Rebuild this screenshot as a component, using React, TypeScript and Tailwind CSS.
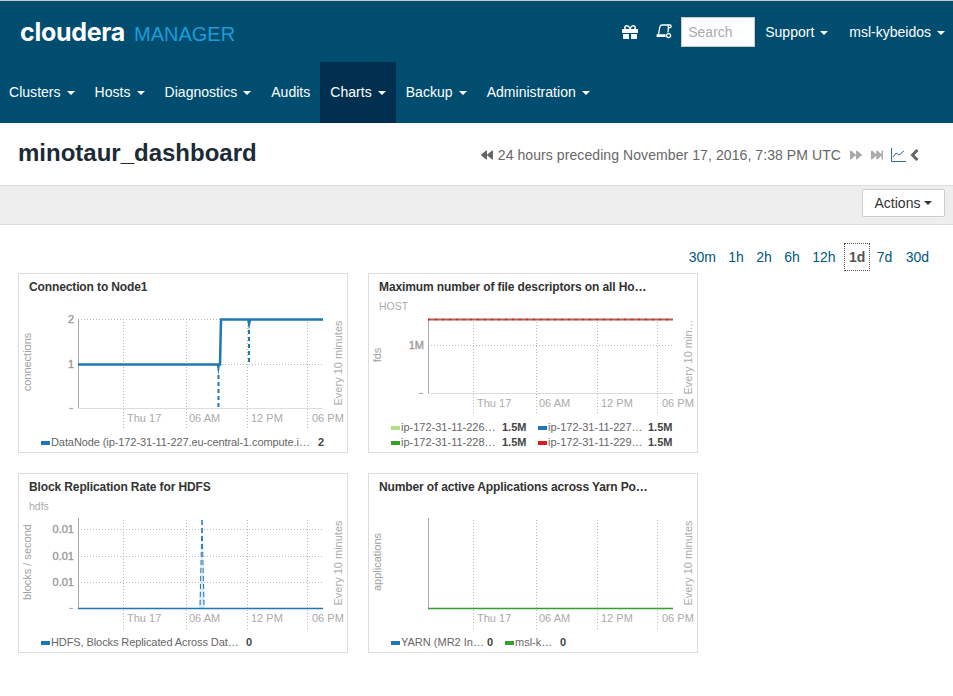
import { FaBackward, FaFastForward, FaForward, FaGift } from 'react-icons/fa';
import { ReactNode } from 'react';

const leftNav = ['Clusters', 'Hosts', 'Diagnostics', 'Audits', 'Charts', 'Backup', 'Administration'];
const ranges = ['30m', '1h', '2h', '6h', '12h', '1d', '7d', '30d'];
const gridX = [104, 167, 228, 288];

function Caret({ className = 'border-t-white' }: { className?: string }) {
  return <span className={`ml-[6px] inline-block h-0 w-0 border-x-4 border-t-4 border-x-transparent ${className}`} />;
}

interface LegendItem {
  color: string;
  label: string;
  value: string;
  labelWidth: number;
  tight?: boolean;
}

interface ChartCardProps {
  title: string;
  subtitle?: string;
  yTitle: string;
  yTitleCenter: number;
  everyLabel?: string;
  axisBottom?: number;
  axisTop?: number;
  gridTop?: number;
  yTicks: { y: number; label: string }[];
  legend: LegendItem[];
  legendCols?: number;
  children?: ReactNode;
}

function ChartCard({
  title,
  subtitle,
  yTitle,
  yTitleCenter,
  everyLabel = 'Every 10 minutes',
  axisBottom = 93,
  axisTop = 4,
  gridTop = 4,
  yTicks,
  legend,
  legendCols = 1,
  children,
}: ChartCardProps) {
  const ticks = ['Thu 17', '06 AM', '12 PM', '06 PM'];
  const tickX = [108, 170, 232, 293];
  const twoRows = legendCols === 2;
  return (
    <div className="flex h-[180px] w-[330px] flex-col overflow-hidden border border-[#dddddd] bg-white">
      <div className="h-[41px] px-[10px] pt-[5px]">
        <div className="h-[16px] text-[12px] font-bold leading-[16px] tracking-[-0.12px] text-[#333333]">{title}</div>
        {subtitle && <div className="mt-[4px] text-[10.5px] leading-[14px] text-[#aaaaaa]">{subtitle}</div>}
      </div>
      <svg width="328" height={twoRows ? 104 : 118} className="block shrink-0 font-['Liberation_Sans',sans-serif]">
        {gridX.map((x) => (
          <line key={x} x1={x + 0.5} x2={x + 0.5} y1={gridTop} y2={axisBottom + 21} stroke="#bbbbbb" strokeDasharray="1 2" />
        ))}
        {yTicks.map(
          (t) =>
            t.y < axisBottom && (
              <line key={t.y} x1={59} x2={304} y1={t.y + 0.5} y2={t.y + 0.5} stroke="#bbbbbb" strokeDasharray="1 2" />
            ),
        )}
        {/* the lowest tick label is cut by the plot edge, as in the real chart */}
        <svg x={0} y={0} width={59} height={axisBottom + 1}>
          {yTicks.map((t) => (
            <text
              key={t.label + t.y}
              x={55}
              y={t.y < axisBottom ? t.y + 4 : t.y + 8}
              textAnchor="end"
              fontSize="11"
              fill="#888888"
              stroke="#aaaaaa"
              strokeWidth="0.4"
            >
              {t.label}
            </text>
          ))}
        </svg>
        <line x1={59.5} x2={59.5} y1={axisTop} y2={axisBottom + 1} stroke="#aaaaaa" />
        <line x1={59} x2={304} y1={axisBottom + 0.5} y2={axisBottom + 0.5} stroke="#dddddd" />
        {ticks.map((t, i) => (
          <text key={t} x={tickX[i]} y={axisBottom + 14} fontSize="11" fill="#aaaaaa">
            {t}
          </text>
        ))}
        {children}
        <text transform={`translate(12 ${yTitleCenter}) rotate(-90)`} textAnchor="middle" fontSize="11" fill="#a0a0a0">
          {yTitle}
        </text>
        <text transform={`translate(323 ${axisBottom === 78 ? 42 : 48}) rotate(-90)`} textAnchor="middle" fontSize="11" fill="#aaaaaa">
          {everyLabel}
        </text>
      </svg>
      <div className={`flex flex-wrap pl-[22px] text-[11px] leading-[15px] text-[#666666] ${twoRows ? 'pt-[1px]' : 'pt-[2px]'}`}>
        {legend.map((item) => (
          <div key={item.label + item.color} className="flex items-center">
            <span className="mr-px h-[4px] w-[9px]" style={{ backgroundColor: item.color }} />
            <span className={`whitespace-nowrap ${item.tight ? 'tracking-[-0.09px]' : ''}`} style={{ width: item.labelWidth }}>
              {item.label}
            </span>
            <span
              className="mr-[12px] whitespace-nowrap font-bold text-[#444444]"
              style={{ width: item.value.length > 1 ? 24 : 6 }}
            >
              {item.value}
            </span>
          </div>
        ))}
      </div>
    </div>
  );
}

function ScrollIcon() {
  return (
    <svg width="16" height="15" viewBox="0 0 16 15" fill="none" stroke="white" strokeWidth="1.3" className="block">
      <path d="M2.5 10 C3.2 8 3.4 4 4 2.5 C4.4 1.4 5.2 1 6 1 H14 C15.4 1 15.6 3.4 14 3.6 H12.4 L12 8.5" />
      <path d="M11.5 1.2 C12.4 1.6 12.6 2.6 12.4 3.6" />
      <rect x="0.6" y="10.2" width="9" height="2.8" fill="white" stroke="none" />
      <circle cx="12.6" cy="11.6" r="2" />
    </svg>
  );
}

export default function App() {
  return (
    <div className="min-h-[696px] w-[953px] overflow-hidden bg-white font-['Liberation_Sans',Arial,sans-serif] text-[14px]">
      {/* Top bar */}
      <header className="h-[123px] border-t border-[#c8c8c8] bg-[#004d70] text-white">
        <div className="flex h-[61px] items-center pl-[20px]">
          <div className="flex items-baseline pt-[2px]">
            <span className="font-['Inter',sans-serif] text-[25px] font-bold leading-none tracking-[-0.3px]">cloudera</span>
            <span className="ml-[9px] text-[20px] leading-none text-[#1b9dd9]">MANAGER</span>
          </div>
          <div className="ml-auto flex items-center pr-[8px]">
            <FaGift size={16} />
            <span className="ml-[18px]">
              <ScrollIcon />
            </span>
            <input
              placeholder="Search"
              readOnly
              className="ml-[9px] h-[30px] w-[74px] border border-[#cccccc] bg-white px-[6px] text-[14px] text-[#555555] placeholder:text-[#aaaaaa]"
            />
            <span className="ml-[10px] flex items-center pt-[2px]">
              Support
              <Caret />
            </span>
            <span className="ml-[21px] flex items-center pt-[2px]">
              msl-kybeidos
              <Caret />
            </span>
          </div>
        </div>
        <nav className="-ml-px flex h-[61px] tracking-[0.03px]">
          {leftNav.map((item) => (
            <a key={item} className={`flex items-center px-[10px] ${item === 'Charts' ? 'bg-[#002f4f]' : ''}`}>
              {item}
              {item !== 'Audits' && <Caret />}
            </a>
          ))}
        </nav>
      </header>

      {/* Title row */}
      <div className="flex h-[62px] items-center justify-between pl-[18px] pr-[34px]">
        <h1 className="pb-[2px] text-[24px] font-bold text-[#1c2b36]">minotaur_dashboard</h1>
        <div className="flex items-center pt-[2px] text-[#666666]">
          <FaBackward size={12} />
          <span className="ml-[5px] tracking-[0.08px]">24 hours preceding November 17, 2016, 7:38 PM UTC</span>
          <FaForward size={12} className="ml-[9px] text-[#aaaaaa]" />
          <FaFastForward size={12} className="ml-[9px] text-[#aaaaaa]" />
          <svg width="15" height="14" viewBox="0 0 15 14" fill="none" stroke="#2a6f93" className="ml-[8px]">
            <path d="M0.5 0 V13.5 H15" />
            <path d="M2 9 L5 5 L8 7 L13 3" />
          </svg>
          <svg width="9" height="12" viewBox="0 0 9 12" fill="none" stroke="#666666" strokeWidth="3" className="ml-[4px]">
            <path d="M7.5 1 L2.5 6 L7.5 11" />
          </svg>
        </div>
      </div>

      {/* Toolbar */}
      <div className="flex h-[40px] items-start justify-end border-y border-[#dddddd] bg-[#eeeeee] pr-[8px] pt-[3px]">
        <button className="flex h-[28px] w-[83px] items-center justify-center rounded-[2px] border border-[#cccccc] bg-white text-[#333333]">
          Actions
          <span className="ml-[4px] inline-block h-0 w-0 border-x-4 border-t-4 border-x-transparent border-t-[#333333]" />
        </button>
      </div>

      {/* Time range */}
      <div className="flex h-[46px] items-end justify-end gap-[0.4px] pr-[18px]">
        {ranges.map((r) => (
          <a
            key={r}
            className={`flex h-[28px] items-center border ${
              r === '1d'
                ? 'ml-[2px] border-dotted border-[#555555] px-[4px] font-bold text-[#555555]'
                : `border-transparent px-[5px] text-[#00597c] ${r === '30d' ? 'ml-px' : ''}`
            }`}
          >
            {r}
          </a>
        ))}
      </div>

      {/* Charts */}
      <div className="mt-[2px] grid w-[698px] grid-cols-2 gap-[20px] pl-[18px]">
        <ChartCard
          title="Connection to Node1"
          yTitle="connections"
          yTitleCenter={47}
          yTicks={[
            { y: 4, label: '2' },
            { y: 49, label: '1' },
            { y: 93, label: '0' },
          ]}
          legend={[
            { color: '#1f78b4', label: 'DataNode (ip-172-31-11-227.eu-central-1.compute.i…', value: '2', labelWidth: 267, tight: true },
          ]}
        >
          <path d="M59 49.5 H198 L201 49.5 L202 4.5 H304" stroke="#1f78b4" strokeWidth="2.5" fill="none" />
          <path d="M197.5 49 H201 L199.5 60 Z" fill="#1f78b4" />
          <path d="M199.5 60 V93" stroke="#1f78b4" strokeWidth="2" strokeDasharray="4 3" fill="none" />
          <path d="M228 4 H232.5 L230 15 Z" fill="#1f78b4" />
          <path d="M230 15 V49" stroke="#1f78b4" strokeWidth="2" strokeDasharray="4 3" fill="none" />
        </ChartCard>
        <ChartCard
          title="Maximum number of file descriptors on all Ho…"
          subtitle="HOST"
          yTitle="fds"
          yTitleCenter={40}
          everyLabel="Every 10 min…"
          axisBottom={78}
          yTicks={[
            { y: 30, label: '1M' },
            { y: 78, label: '0' },
          ]}
          legendCols={2}
          legend={[
            { color: '#b2df8a', label: 'ip-172-31-11-226…', value: '1.5M', labelWidth: 101 },
            { color: '#1f78b4', label: 'ip-172-31-11-227…', value: '1.5M', labelWidth: 100 },
            { color: '#33a02c', label: 'ip-172-31-11-228…', value: '1.5M', labelWidth: 101 },
            { color: '#e31a1c', label: 'ip-172-31-11-229…', value: '1.5M', labelWidth: 100 },
          ]}
        >
          <path d="M59 4.5 H304" stroke="#b0604f" strokeWidth="2" fill="none" />
          <path d="M59 4.5 H304" stroke="#e31a1c" strokeWidth="1.5" strokeDasharray="2 5" fill="none" />
        </ChartCard>
        <ChartCard
          title="Block Replication Rate for HDFS"
          subtitle="hdfs"
          yTitle="blocks / second"
          yTitleCenter={47}
          axisTop={3}
          gridTop={5}
          yTicks={[
            { y: 14, label: '0.01' },
            { y: 41, label: '0.01' },
            { y: 67, label: '0.01' },
            { y: 93, label: '0' },
          ]}
          legend={[{ color: '#1f78b4', label: 'HDFS, Blocks Replicated Across Dat…', value: '0', labelWidth: 195, tight: true }]}
        >
          <path d="M59 93.5 H304" stroke="#1f78b4" strokeWidth="1.5" fill="none" />
          <path d="M183 5 L180 93 H186 Z" fill="#1f78b4" fillOpacity="0.15" />
          <path d="M183 5 L181 93" stroke="#1f78b4" strokeWidth="1" strokeDasharray="5 3" fill="none" />
          <path d="M183 5 L185 93" stroke="#1f78b4" strokeWidth="1" strokeDasharray="5 3" fill="none" />
        </ChartCard>
        <ChartCard
          title="Number of active Applications across Yarn Po…"
          yTitle="applications"
          yTitleCenter={47}
          axisTop={3}
          gridTop={5}
          yTicks={[]}
          legend={[
            { color: '#1f78b4', label: 'YARN (MR2 In…', value: '0', labelWidth: 86 },
            { color: '#33a02c', label: 'msl-k…', value: '0', labelWidth: 45 },
          ]}
        >
          <path d="M59 93.5 H304" stroke="#33a02c" strokeWidth="1.5" fill="none" />
        </ChartCard>
      </div>
    </div>
  );
}
